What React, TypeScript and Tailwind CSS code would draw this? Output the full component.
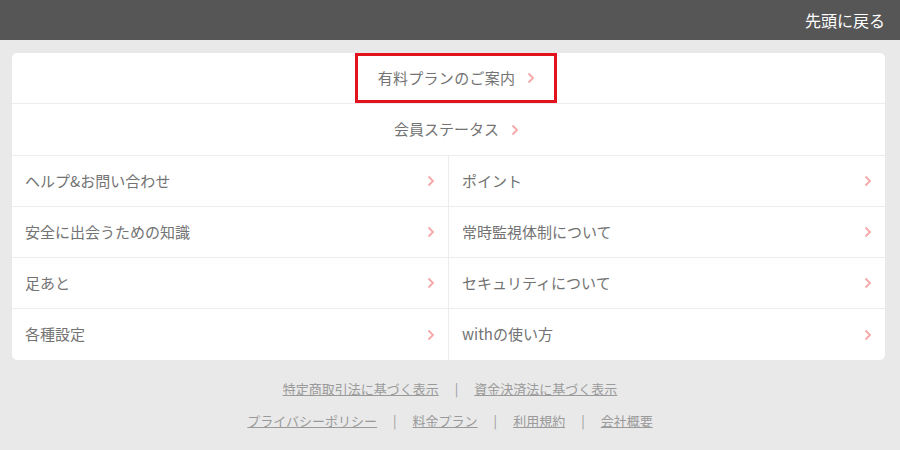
const font = { fontFamily: '"Noto Sans CJK JP", "Noto Sans", sans-serif' };

type Item = { label: string };

const rows: [Item, Item][] = [
  [{ label: "ヘルプ&お問い合わせ" }, { label: "ポイント" }],
  [{ label: "安全に出会うための知識" }, { label: "常時監視体制について" }],
  [{ label: "足あと" }, { label: "セキュリティについて" }],
  [{ label: "各種設定" }, { label: "withの使い方" }],
];

function Chevron() {
  return (
    <svg width="8" height="12" viewBox="0 0 8 12" className="shrink-0">
      <polyline
        points="1.5,1.5 6,6 1.5,10.5"
        fill="none"
        stroke="#f6a7a7"
        strokeWidth="1.8"
      />
    </svg>
  );
}

function Cell({ label, last }: { label: string; last?: boolean }) {
  return (
    <a
      href="#"
      className={`flex flex-1 items-center justify-between pl-[13px] pr-[13px] text-[15px] text-[#737373] ${
        last ? "" : "border-r border-[#ececec]"
      }`}
    >
      <span>{label}</span>
      <Chevron />
    </a>
  );
}

export default function App() {
  return (
    <div className="min-h-[450px] w-full bg-[#e9e9e9]" style={font}>
      {/* header bar */}
      <div className="flex h-10 items-center justify-end bg-[#565656] pr-[15px]">
        <span className="text-[16px] text-white">先頭に戻る</span>
      </div>

      <div className="pl-3 pr-[15px] pt-[13px]">
        <div className="overflow-hidden rounded-[5px] bg-white">
          {/* highlighted plan row */}
          <div className="flex h-[51px] justify-center border-b border-[#ececec]">
            <a
              href="#"
              className="ml-[15px] flex items-center gap-[12px] border-[3px] border-[#e3131e] pl-[20px] pr-[19px] text-[15px] tracking-[0.3px] text-[#737373]"
            >
              <span>有料プランのご案内</span>
              <Chevron />
            </a>
          </div>

          <div className="flex h-[52px] items-center justify-center gap-[12px] border-b border-[#ececec] pl-[16px] text-[15px] text-[#737373]">
            <span>会員ステータス</span>
            <Chevron />
          </div>

          {rows.map(([l, r], i) => (
            <div
              key={l.label}
              className={`flex h-[51px] ${
                i < rows.length - 1 ? "border-b border-[#ececec]" : ""
              }`}
            >
              <Cell label={l.label} />
              <Cell label={r.label} last />
            </div>
          ))}
        </div>
      </div>

      {/* footer links */}
      <div className="flex flex-col items-center gap-[12px] pt-[19px] text-[13px] text-[#9a9a9a]">
        <div className="flex items-center gap-[16px]">
          <a href="#" className="underline">特定商取引法に基づく表示</a>
          <span>|</span>
          <a href="#" className="underline">資金決済法に基づく表示</a>
        </div>
        <div className="flex items-center gap-[16px]">
          <a href="#" className="underline">プライバシーポリシー</a>
          <span>|</span>
          <a href="#" className="underline">料金プラン</a>
          <span>|</span>
          <a href="#" className="underline">利用規約</a>
          <span>|</span>
          <a href="#" className="underline">会社概要</a>
        </div>
      </div>
    </div>
  );
}
